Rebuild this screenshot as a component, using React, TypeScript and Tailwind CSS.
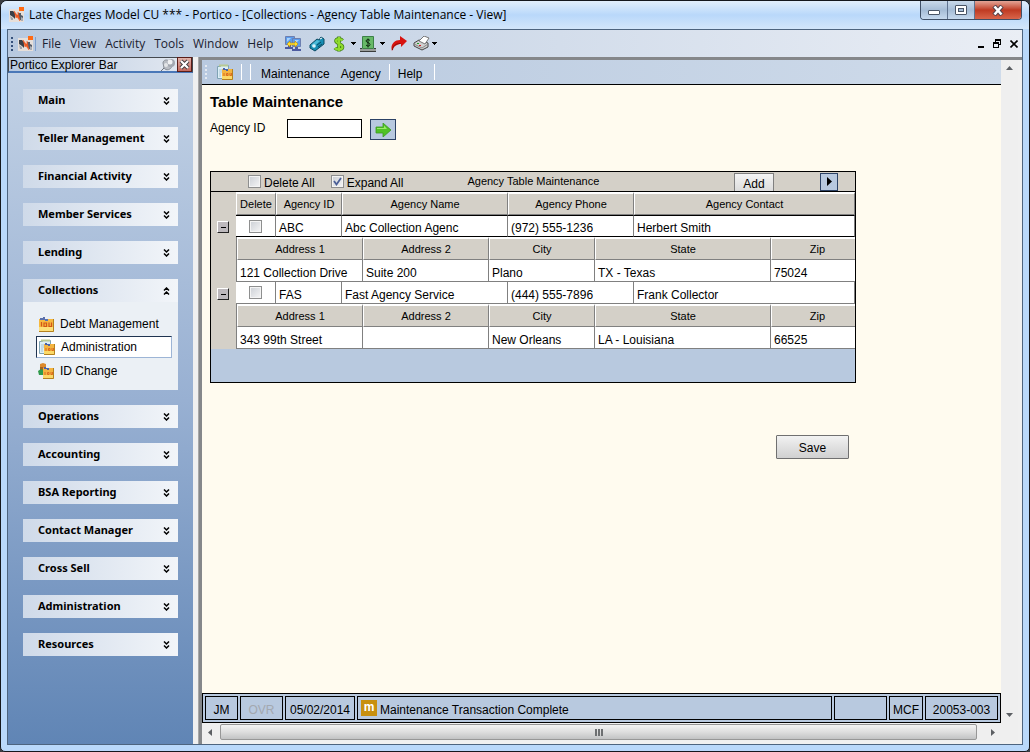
import React from "react";

interface Agency {
  id: string;
  name: string;
  phone: string;
  contact: string;
  address1: string;
  address2: string;
  city: string;
  state: string;
  zip: string;
}

const agencies: Agency[] = [
  {
    id: "ABC",
    name: "Abc Collection Agenc",
    phone: "(972) 555-1236",
    contact: "Herbert Smith",
    address1: "121 Collection Drive",
    address2: "Suite 200",
    city: "Plano",
    state: "TX - Texas",
    zip: "75024",
  },
  {
    id: "FAS",
    name: "Fast Agency Service",
    phone: "(444) 555-7896",
    contact: "Frank Collector",
    address1: "343 99th Street",
    address2: "",
    city: "New Orleans",
    state: "LA - Louisiana",
    zip: "66525",
  },
];

const sectionsAbove = ["Main", "Teller Management", "Financial Activity", "Member Services", "Lending"];
const sectionsBelow = [
  "Operations",
  "Accounting",
  "BSA Reporting",
  "Contact Manager",
  "Cross Sell",
  "Administration",
  "Resources",
];

const menus = ["File", "View", "Activity", "Tools", "Window", "Help"];

/* ---------- icons ---------- */

const PorticoIcon = () => (
  <svg width="16" height="16" viewBox="0 0 16 16" className="shrink-0">
    <rect y="2" width="15" height="13" fill="#e6dfda" />
    <path d="M1 4h3l2 2v6L4 10 1 8z" fill="#3a4049" />
    <path d="M1 9l3 2v2H2z" fill="#9da3ab" />
    <path d="M9 6h3v2l2 1v4h-3l-2-3z" fill="#545b66" />
    <path d="M12 10l2 1v3h-2z" fill="#a9aeb5" />
    <path d="M5 4l3 4h1V5l2 9-3-4-1 1z" fill="#ef5a22" stroke="#ef5a22" strokeWidth=".5" />
    <rect x="10" y="0" width="5" height="4" fill="#ff6a13" />
  </svg>
);

const IouNote = () => (
  <>
    <path d="M5 5h11v10l-1 1H5z" fill="#f3b440" />
    <path d="M5 12h11v3l-1 1H5z" fill="#fbd968" />
    <path d="M7 9v3M9.500 9.500h1.500v2H9.500zM13 9v2.500h1.500V9" fill="none" stroke="#d9641c" strokeWidth=".9" />
    <path d="M6 4h2v1h3v2H9V6H6z" fill="#4a63a8" />
    <path d="M15.500 5v10.500H5" fill="none" stroke="#b4811f" />
  </>
);

const DebtIcon = () => (
  <svg width="16" height="16" viewBox="0 0 16 16" className="shrink-0">
    <path d="M1 3h15v12l-1 1H1z" fill="#f6b83f" />
    <path d="M1 11h15v4l-1 1H1z" fill="#fde07a" />
    <path d="M3.500 6v4.500M6 7h2.500v3.500H6zM11 6.500v4h2.500v-4" fill="none" stroke="#d2551a" strokeWidth="1.200" />
    <path d="M2 2h3V1h2v2h3v2H7V4H2z" fill="#5a70ac" />
    <path d="M15.500 3v12.500H1" fill="none" stroke="#b4811f" />
  </svg>
);

const AdminIcon = () => (
  <svg width="16" height="16" viewBox="0 0 16 16" className="shrink-0">
    <path d="M.5 2.500h3v-1h8v13H.5z" fill="#dceef5" stroke="#7fa3b4" />
    <path d="M2 .5h9v2H2z" fill="#b8c992" />
    <path d="M2 6h3M2 8h3M2 10h2M2 12h2" stroke="#a9c6d4" />
    <IouNote />
  </svg>
);

const IdChangeIcon = () => (
  <svg width="16" height="16" viewBox="0 0 16 16" className="shrink-0">
    <path d="M2 1l3-1 3 1v5H2z" fill="#dd8a2b" />
    <path d="M2 4h3v3H2z" fill="#a8601d" />
    <path d="M0 8l3-2 4 2v4H1z" fill="#2f9a4b" />
    <IouNote />
  </svg>
);

const ComputersIcon = () => (
  <svg width="16" height="16" viewBox="0 0 16 16">
    <path d="M.5.5h9v8h-9z" fill="#5b9cec" stroke="#6d7fb0" />
    <path d="M2 2h4L2 6z" fill="#a9d2fb" />
    <path d="M7.500 2.500h8v8h-8z" fill="#5b9cec" stroke="#6d7fb0" />
    <path d="M10 4h4l-4 4z" fill="#a9d2fb" />
    <path d="M3 9h3v2h2v2H0v-2h3zM10 11h3v2h3v2H7v-2h3z" fill="#4d5ba0" />
    <path d="M2 8l3-3v2h5V5l3 3-3 3V9H5v2z" fill="#ffdf2e" stroke="#b8860b" strokeWidth=".6" />
  </svg>
);

const TagIcon = () => (
  <svg width="16" height="16" viewBox="0 0 16 16">
    <path d="M1 9l7-6 2 1 2-3 3 2v5l-9 7-5-3z" fill="#168db3" stroke="#0b4a63" />
    <path d="M2 9l6-5 3 1-7 6z" fill="#4dbbd8" />
    <circle cx="5" cy="10" r="1.800" fill="#d9f2fa" />
    <path d="M8 9l4-3M9 11l4-3" stroke="#0b4a63" />
    <path d="M11 3l2-1" stroke="#fff" />
  </svg>
);

const DollarIcon = () => (
  <svg width="12" height="16" viewBox="0 0 12 16">
    <path
      d="M9.500 4.500C8 2.500 3 2.500 3 5s6.500 3 6.500 6-6 3-7.500 1M6 .5v15"
      fill="none"
      stroke="#3f7d18"
      strokeWidth="3.600"
    />
    <path
      d="M9.500 4.500C8 2.500 3 2.500 3 5s6.500 3 6.500 6-6 3-7.500 1M6 1v14"
      fill="none"
      stroke="#8fdb2e"
      strokeWidth="2.200"
    />
  </svg>
);

const CashIcon = () => (
  <svg width="16" height="16" viewBox="0 0 16 16">
    <path d="M2.500.5h11v12h-11z" fill="#67b968" stroke="#3c8147" />
    <path d="M10 4.500C9 3 6 3.500 6 5s4 1.500 4 3.500S7 10.500 6 9M8 2.500v9" fill="none" stroke="#0c240f" />
    <path d="M0 13h16v2H0z" fill="#9a9e9c" />
    <path d="M0 12.500h2M14 12.500h2M0 15.500h16" stroke="#3a3d3c" />
  </svg>
);

const RedoIcon = () => (
  <svg width="16" height="16" viewBox="0 0 16 16">
    <path d="M9 0l7 5-6 6V8C6 8 3 10 1 15-1 9 3 4 9 4z" fill="#d8130f" />
    <path d="M1.500 14c0-4 3-6.500 8-6.500" fill="none" stroke="#8d0f0c" />
  </svg>
);

const PrinterIcon = () => (
  <svg width="17" height="15" viewBox="0 0 17 15">
    <path d="M1 7l5-3 9 3v4l-6 3-8-4z" fill="#d0d0d0" stroke="#444" />
    <path d="M6 5l5-5 5 2-4 6z" fill="#fff" stroke="#777" />
    <path d="M1 8l8 4 6-4" fill="none" stroke="#888" />
    <path d="M4 7h2v1H4z" fill="#1e9c2b" />
    <path d="M6 9h2v1H6z" fill="#d51b1b" />
  </svg>
);

const PinIcon = () => (
  <svg width="16" height="14" viewBox="0 0 16 14">
    <path d="M5 9l-4 4" stroke="#6f747c" />
    <path d="M3 5c0-3 4-4 6-2l3 5c-1 4-6 5-8 2z" fill="#b9bdc4" stroke="#8b9099" />
    <circle cx="11" cy="5" r="4" fill="#a3a8b1" />
    <circle cx="10" cy="4" r="2.500" fill="#f0f1f3" />
    <circle cx="6" cy="7" r="2" fill="#e3e5e8" />
  </svg>
);

const Caret = () => (
  <svg width="5" height="3" viewBox="0 0 5 3" shapeRendering="crispEdges">
    <path d="M0 0h5L2.500 3z" />
  </svg>
);

const Chevrons = ({ up }: { up?: boolean }) => (
  <svg width="7" height="8" viewBox="0 0 7 8" className={up ? "rotate-180" : ""}>
    <path d="M1 .5l2.500 2.500L6 .5M1 4.500L3.500 7 6 4.500" fill="none" stroke="#000" strokeWidth="1.500" />
  </svg>
);

/* ---------- small parts ---------- */

const Grip = () => (
  <span className="flex flex-col gap-[2px]">
    {[0, 1, 2, 3].map((n) => (
      <span key={n} className="size-[2px] bg-[#35507a]" />
    ))}
  </span>
);

const Separator = () => <span className="h-4 w-px bg-white" />;

const CheckBox = ({ id, checked, label }: { id: string; checked?: boolean; label?: string }) => (
  <span className="relative flex size-[13px]">
    <input
      id={id}
      type="checkbox"
      aria-label={label}
      defaultChecked={checked}
      className="peer size-[13px] appearance-none border border-[#8e8f8f] bg-linear-to-br from-[#cbcfd5] to-[#f6f6f6] shadow-[inset_0_0_0_1px_#f4f4f4]"
    />
    <svg
      viewBox="0 0 13 13"
      className="pointer-events-none absolute inset-0 hidden size-[13px] peer-checked:block"
    >
      <path d="M3 6l2.500 3.500L10 3" fill="none" stroke="#4b5f97" strokeWidth="1.800" />
    </svg>
  </span>
);

const SectionHeader = ({ title, open }: { title: string; open?: boolean }) => (
  <button
    aria-expanded={!!open}
    className="flex h-[23px] w-full items-center justify-between bg-linear-to-r from-[#cfdae9] to-[#f2f5f9] pr-2 pl-[15px] font-['Noto_Sans',sans-serif] text-[11px] font-bold text-black"
  >
    {title}
    <Chevrons up={open} />
  </button>
);

const TaskLink = ({ label, icon, active }: { label: string; icon: React.ReactNode; active?: boolean }) => (
  <a
    href="#"
    className={
      active
        ? "flex h-[22px] items-center gap-[6px] border border-t-[#1f3350] border-r-[#9db5d6] border-b-[#9db5d6] border-l-[#1f3350] bg-white pl-[2px]"
        : "flex h-[23px] items-center gap-[6px] pl-[2px]"
    }
  >
    {icon}
    {label}
  </a>
);

const ExplorerBar = () => (
  <aside className="flex w-[185px] shrink-0 flex-col bg-linear-to-b from-[#c4d3e6] via-[#98b0d2] to-[#6085b5]">
    <div className="flex h-4 items-center border border-b-2 border-[#45494f] border-b-[#4a78b8] bg-linear-to-r from-[#b7c9e0] to-[#e4e9f1] pl-[1px] text-[12px]">
      <span className="flex-1">Portico Explorer Bar</span>
      <button aria-label="Pin">
        <PinIcon />
      </button>
      <button
        aria-label="Close explorer bar"
        className="ml-[1px] flex size-[15px] items-center justify-center border border-[#5a1d18] bg-linear-to-b from-[#e0b3ab] to-[#c4695e]"
      >
        <svg width="11" height="11" viewBox="0 0 11 11">
          <path d="M2 2l7 7M9 2L2 9" stroke="#3f3a3d" strokeWidth="4" />
          <path d="M2 2l7 7M9 2L2 9" stroke="#fff" strokeWidth="2.200" />
        </svg>
      </button>
    </div>
    <nav className="flex flex-col gap-[15px] px-[15px] pt-4 pb-8">
      {sectionsAbove.map((title) => (
        <SectionHeader key={title} title={title} />
      ))}
      <div className="bg-[#ebf0f5]">
        <SectionHeader title="Collections" open />
        <div className="flex flex-col gap-[1px] px-[6px] pt-[10px] pb-2 pl-[13px] text-[12px]">
          <TaskLink label="Debt Management" icon={<DebtIcon />} />
          <TaskLink label="Administration" icon={<AdminIcon />} active />
          <TaskLink label="ID Change" icon={<IdChangeIcon />} />
        </div>
      </div>
      {sectionsBelow.map((title) => (
        <SectionHeader key={title} title={title} />
      ))}
    </nav>
  </aside>
);

/* ---------- agency table ---------- */

const headCell =
  "h-[23px] border-t-2 border-r border-b border-l border-t-white border-r-[#808080] border-b-[#808080] border-l-white bg-[#d4d0c8] p-0 text-[11px] font-normal";
const dataCell = "h-[22px] border-r border-r-[#808080] bg-white p-0 pt-1 pl-[3px] text-[12px] leading-4";

const AddressTable = ({ agency }: { agency: Agency }) => (
  <table className="w-full table-fixed border-separate border-spacing-0">
    <colgroup>
      <col className="w-[126px]" />
      <col className="w-[126px]" />
      <col className="w-[106px]" />
      <col className="w-[176px]" />
      <col />
    </colgroup>
    <thead>
      <tr>
        {["Address 1", "Address 2", "City", "State", "Zip"].map((title) => (
          <th key={title} className={`${headCell} last:border-r-0 last:pl-2`}>
            {title}
          </th>
        ))}
      </tr>
    </thead>
    <tbody>
      <tr>
        {[agency.address1, agency.address2, agency.city, agency.state, agency.zip].map((value, index) => (
          <td key={index} className={`${dataCell} border-b border-b-[#808080] last:border-r-0`}>
            {value}
          </td>
        ))}
      </tr>
    </tbody>
  </table>
);

const AgencyRows = ({ agency, selected }: { agency: Agency; selected: boolean }) => {
  const rowCell = selected
    ? `${dataCell} border-y border-y-black`
    : `${dataCell} border-b border-b-[#808080]`;
  return (
    <>
      <tr>
        <td className="bg-[#d4d0c8] p-0 align-bottom">
          <button
            aria-label={`Collapse ${agency.id}`}
            className="mb-1 ml-[6px] flex size-3 items-center justify-center border border-t-white border-r-[#222] border-b-[#222] border-l-white bg-[#bdb9bd]"
          >
            <span className="h-px w-[5px] bg-black" />
          </button>
        </td>
        <td className={`${rowCell} align-top`}>
          <div className="ml-[10px]">
            <CheckBox id={`delete-${agency.id}`} label={`Delete ${agency.id}`} />
          </div>
        </td>
        <td className={rowCell}>{agency.id}</td>
        <td className={rowCell}>{agency.name}</td>
        <td className={rowCell}>{agency.phone}</td>
        <td className={rowCell}>{agency.contact}</td>
      </tr>
      <tr>
        <td className="bg-[#d4d0c8] p-0" />
        <td colSpan={5} className="border-l border-l-[#808080] p-0">
          <AddressTable agency={agency} />
        </td>
      </tr>
    </>
  );
};

const AgencyTable = () => (
  <section className="mt-[31px] w-[646px] border border-black bg-[#b8c9df] pb-[33px]">
    <div className="flex h-5 items-center border-b border-black bg-[#d4d0c8] pr-[17px] pl-[37px] text-[12px]">
      <CheckBox id="delete-all" />
      <label htmlFor="delete-all" className="mr-4 ml-[3px] pt-[2px]">
        Delete All
      </label>
      <CheckBox id="expand-all" checked />
      <label htmlFor="expand-all" className="ml-[3px] pt-[2px]">
        Expand All
      </label>
      <h2 className="flex-1 pl-16 text-[11px]">Agency Table Maintenance</h2>
      <button className="mr-[46px] h-[18px] w-10 border border-b-0 border-[#808080] bg-linear-to-b from-[#f4f4f4] to-[#dcdcdc] pt-[2px] leading-4">
        Add
      </button>
      <button
        aria-label="Next page"
        className="flex h-[18px] w-[18px] items-center justify-center border border-[#2c4265] bg-[#b8c9df]"
      >
        <svg width="5" height="9" viewBox="0 0 5 9">
          <path d="M0 0l5 4.500L0 9z" />
        </svg>
      </button>
    </div>
    <table className="w-full table-fixed border-separate border-spacing-0">
      <colgroup>
        <col className="w-[25px]" />
        <col className="w-10" />
        <col className="w-[66px]" />
        <col className="w-[166px]" />
        <col className="w-[126px]" />
        <col />
      </colgroup>
      <thead>
        <tr>
          <td className="bg-[#d4d0c8]" />
          {["Delete", "Agency ID", "Agency Name", "Agency Phone", "Agency Contact"].map((title) => (
            <th key={title} className={headCell}>
              {title}
            </th>
          ))}
        </tr>
      </thead>
      <tbody>
        {agencies.map((agency, index) => (
          <AgencyRows key={agency.id} agency={agency} selected={index === 0} />
        ))}
      </tbody>
    </table>
  </section>
);

/* ---------- frame ---------- */

const TitleBar = () => (
  <header className="flex h-[28px] shrink-0 items-start bg-linear-to-b from-[#e2effc] via-[#b9d8fa] to-[#d3e6fb] pr-[7px] pl-2">
    <div className="flex h-[28px] flex-1 items-center gap-1 font-['Open_Sans',sans-serif] text-[12px]">
      <PorticoIcon />
      <h1>Late Charges Model CU *** - Portico - [Collections - Agency Table Maintenance - View]</h1>
    </div>
    <div className="flex h-[19px] overflow-hidden rounded-b-[4px] border border-t-0 border-[#3f4f66]">
      <button
        aria-label="Minimize"
        className="flex w-[27px] items-center justify-center border-r border-[#5f7390] bg-linear-to-b from-[#c9d9ea] via-[#a5bcd6] to-[#c6d9ee] pt-1"
      >
        <span className="h-[5px] w-3 rounded-[1px] border border-[#4a5566] bg-white" />
      </button>
      <button
        aria-label="Maximize"
        className="flex w-[27px] items-center justify-center border-r border-[#5f7390] bg-linear-to-b from-[#c9d9ea] via-[#a5bcd6] to-[#c6d9ee]"
      >
        <span className="flex h-[10px] w-3 items-center justify-center rounded-[1px] border border-[#4a5566] bg-white">
          <span className="h-1 w-[6px] border border-[#4a5566] bg-[#a5bcd6]" />
        </span>
      </button>
      <button
        aria-label="Close"
        className="flex w-[46px] items-center justify-center bg-linear-to-b from-[#e3a496] via-[#bf3a22] to-[#d9654a]"
      >
        <svg width="12" height="11" viewBox="0 0 12 11">
          <path d="M2 1l8 9M10 1L2 10" stroke="#54424a" strokeWidth="4.500" />
          <path d="M2.500 1.500l7 8M9.500 1.500l-7 8" stroke="#fff" strokeWidth="2.600" />
        </svg>
      </button>
    </div>
  </header>
);

const MenuBar = () => (
  <div className="flex h-[27px] shrink-0 items-center bg-linear-to-r from-[#b8c9df] to-[#eaeef5] pr-1 pl-[3px] font-['Open_Sans',sans-serif] text-[12px] text-[#1c2230]">
    <Grip />
    <span className="ml-[5px] flex items-center gap-[1px]">
      <PorticoIcon />
      <span className="h-[14px] w-px bg-[#7ea0cf]" />
    </span>
    <nav className="ml-[6px] flex gap-[9px]">
      {menus.map((menu) => (
        <button key={menu}>{menu}</button>
      ))}
    </nav>
    <div className="ml-3 flex flex-1 items-center">
      <button aria-label="Connection" className="mr-2">
        <ComputersIcon />
      </button>
      <button aria-label="Key" className="mr-2">
        <TagIcon />
      </button>
      <button aria-label="Money" className="mr-1 flex items-center gap-[6px]">
        <DollarIcon />
        <Caret />
      </button>
      <button aria-label="Cash" className="mr-[6px] flex items-center gap-1">
        <CashIcon />
        <Caret />
      </button>
      <button aria-label="Forward" className="mr-[6px]">
        <RedoIcon />
      </button>
      <button aria-label="Print" className="flex items-center gap-[2px]">
        <PrinterIcon />
        <Caret />
      </button>
    </div>
    <div className="flex items-center gap-[9px]">
      <button aria-label="Minimize document" className="flex h-2 w-[6px] items-end">
        <span className="h-[2px] w-[6px] bg-black" />
      </button>
      <button aria-label="Restore document">
        <svg width="8" height="9" viewBox="0 0 8 9" shapeRendering="crispEdges">
          <path d="M2 0h6v6H6V5h1V2H3v1H2zM0 3h6v6H0zM1 5v3h4V5z" fillRule="evenodd" />
        </svg>
      </button>
      <button aria-label="Close document">
        <svg width="8" height="8" viewBox="0 0 8 8">
          <path d="M.5.5l7 7M7.500.5l-7 7" stroke="#000" strokeWidth="1.600" />
        </svg>
      </button>
    </div>
  </div>
);

const Toolbar = () => (
  <div className="flex h-[25px] shrink-0 items-center border-b border-black bg-linear-to-r from-[#b8c9df] to-[#cfdbea] pl-[3px] text-[12px]">
    <span className="flex flex-col gap-[2px]">
      {[0, 1, 2, 3].map((n) => (
        <span key={n} className="size-[2px] bg-[#e4e9f0]" />
      ))}
    </span>
    <button aria-label="Administration" className="mr-2 ml-[10px]">
      <AdminIcon />
    </button>
    <Separator />
    <span className="mr-[10px] ml-2 flex">
      <Separator />
    </span>
    <button className="mr-[11px] pt-[3px]">Maintenance</button>
    <button className="mr-2 pt-[3px]">Agency</button>
    <Separator />
    <button className="mr-3 ml-2 pt-[3px]">Help</button>
    <Separator />
  </div>
);

const statusCell = "flex items-center justify-center border border-black pt-[3px]";

const StatusBar = () => (
  <footer className="flex h-[30px] shrink-0 gap-[2px] border border-black bg-[#b8c9df] p-[2px] text-[12px]">
    <div className={`${statusCell} w-[33px]`}>JM</div>
    <div className={`${statusCell} w-[43px] text-[#a3a8b0]`}>OVR</div>
    <div className={`${statusCell} w-[70px]`}>05/02/2014</div>
    <div className="flex flex-1 items-center gap-[3px] border border-black pl-[3px]">
      <span className="flex size-4 items-center justify-center bg-[#c8900f] pb-[2px] text-[12px] leading-3 font-bold text-white">
        m
      </span>
      <span className="pt-[3px]">Maintenance Transaction Complete</span>
    </div>
    <div className="w-[53px] border border-black" />
    <div className={`${statusCell} w-[34px]`}>MCF</div>
    <div className={`${statusCell} w-[73px]`}>20053-003</div>
  </footer>
);

const ScrollArrow = ({ label, points }: { label: string; points: string }) => (
  <button aria-label={label} className="flex size-[17px] items-center justify-center">
    <svg width="7" height="7" viewBox="0 0 7 7">
      <polygon points={points} fill="#5c5f63" />
    </svg>
  </button>
);

const DocumentWindow = () => (
  <div className="flex min-w-0 flex-1 flex-col border-t-[3px] border-l-[3px] border-[#85878a] bg-[#f0f0f0] pr-1 pb-[3px]">
    <div className="flex flex-1">
      <div className="flex min-w-0 flex-1 flex-col">
        <Toolbar />
        <main className="flex-1 bg-[#fffbef] px-2 pt-2 pb-6">
          <h2 className="text-[15px] leading-[18px] font-bold">Table Maintenance</h2>
          <div className="mt-2 flex h-[21px] items-start text-[12px]">
            <label htmlFor="agency-id" className="w-[77px] leading-[18px]">
              Agency ID
            </label>
            <input id="agency-id" type="text" className="h-[19px] w-[75px] border border-black bg-white px-1" />
            <button
              aria-label="Go"
              className="ml-2 flex h-[21px] w-[26px] items-center justify-center border border-[#2c4265] bg-[#b8c9df]"
            >
              <svg width="16" height="14" viewBox="0 0 16 14">
                <path d="M1 4h7V0l8 7-8 7v-4H1z" fill="#4fc224" stroke="#3a9a22" strokeWidth=".8" />
                <path d="M2 5h7V2.500L12 6H2z" fill="#9bea6c" />
              </svg>
            </button>
          </div>
          <AgencyTable />
          <div className="mt-[52px] flex w-[639px] justify-end">
            <button className="h-6 w-[73px] rounded-[1px] border border-[#707070] bg-linear-to-b from-[#f2f2f2] to-[#d0d0d0] pt-[2px] text-[12px]">
              Save
            </button>
          </div>
        </main>
        <StatusBar />
      </div>
      <div className="flex w-[17px] flex-col justify-between bg-[#efefef]">
        <ScrollArrow label="Scroll up" points="0,5 7,5 3.5,1" />
        <ScrollArrow label="Scroll down" points="0,2 7,2 3.5,6" />
      </div>
    </div>
    <div className="flex h-[18px] shrink-0 items-center bg-[#efefef] pr-[17px]">
      <ScrollArrow label="Scroll left" points="5,0 5,7 1,3.5" />
      <div className="ml-[1px] flex h-4 flex-1 items-center justify-center gap-[1px] rounded-[2px] border border-[#979797] bg-linear-to-b from-[#f4f4f4] via-[#dedede] to-[#c2c3c4]">
        <span className="h-[7px] w-[2px] bg-[#6e7072]" />
        <span className="h-[7px] w-[2px] bg-[#6e7072]" />
        <span className="h-[7px] w-[2px] bg-[#6e7072]" />
      </div>
      <span className="ml-[7px]">
        <ScrollArrow label="Scroll right" points="2,0 2,7 6,3.5" />
      </span>
    </div>
  </div>
);

export default function App() {
  return (
    <div className="bg-[#3a3d42]">
      <div className="flex min-h-screen flex-col overflow-hidden rounded-t-[7px] rounded-b-[5px] border border-[#15181d] bg-[#b9d8fa] font-['Liberation_Sans',Arial,sans-serif] text-black">
        <TitleBar />
        <div className="mx-[6px] mb-[6px] flex flex-1 flex-col border border-[#4d647f]">
          <MenuBar />
          <div className="flex flex-1 bg-[#f0f0f0]">
            <ExplorerBar />
            <div className="w-[6px] shrink-0 border-r border-[#a8a8a8]" />
            <DocumentWindow />
          </div>
        </div>
      </div>
    </div>
  );
}
